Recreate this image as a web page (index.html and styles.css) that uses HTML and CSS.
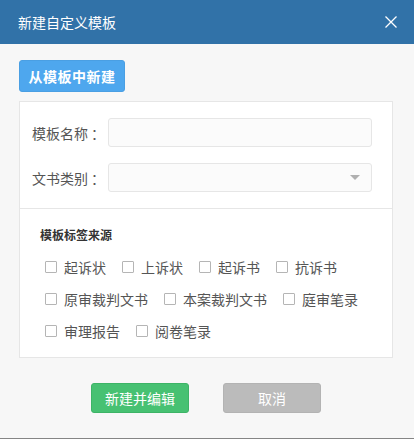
FILE: index.html
```html
<!DOCTYPE html>
<html lang="zh-CN">
<head>
<meta charset="utf-8">
<link rel="stylesheet" href="styles.css">
</head>
<body>
<div class="dialog">
  <div class="header">
    <span class="title">新建自定义模板</span>
    <svg class="close" width="12" height="12" viewBox="0 0 12 12"><path d="M0.5 0.5 L11.5 11.5 M11.5 0.5 L0.5 11.5" stroke="#fff" stroke-width="1.3" fill="none"/></svg>
  </div>
  <div class="content">
    <div class="top-row"><button class="btn-blue">从模板中新建</button></div>
    <div class="panel">
      <div class="form">
        <div class="field"><label class="lbl">模板名称<span class="colon">：</span></label><div class="input"></div></div>
        <div class="field"><label class="lbl">文书类别<span class="colon">：</span></label><div class="input select"><span class="caret"></span></div></div>
      </div>
      <div class="tags">
        <div class="tags-title">模板标签来源</div>
        <div class="row">
          <span class="cb"><i class="box"></i>起诉状</span>
          <span class="cb"><i class="box"></i>上诉状</span>
          <span class="cb"><i class="box"></i>起诉书</span>
          <span class="cb"><i class="box"></i>抗诉书</span>
        </div>
        <div class="row">
          <span class="cb"><i class="box"></i>原审裁判文书</span>
          <span class="cb"><i class="box"></i>本案裁判文书</span>
          <span class="cb"><i class="box"></i>庭审笔录</span>
        </div>
        <div class="row">
          <span class="cb"><i class="box"></i>审理报告</span>
          <span class="cb"><i class="box"></i>阅卷笔录</span>
        </div>
      </div>
    </div>
    <div class="footer">
      <button class="btn btn-green">新建并编辑</button>
      <button class="btn btn-grey">取消</button>
    </div>
  </div>
</div>
</body>
</html>
```
FILE: styles.css
```css
html, body {
  margin: 0;
  padding: 0;
}
body {
  width: 414px;
  height: 439px;
  overflow: hidden;
  font-family: "Noto Sans CJK SC", "Noto Sans", sans-serif;
  background: #f7f7f7;
}
.dialog {
  height: 438px;
  border-bottom: 1px solid #858585;
  background: #f7f7f7;
}
.header {
  height: 44px;
  background: #3172a8;
  display: flex;
  align-items: center;
  justify-content: space-between;
  padding: 0 17px 0 18px;
}
.title {
  color: #fff;
  font-size: 14px;
  line-height: 20px;
}
.close {
  display: block;
}
.content {
  padding: 16px 21px 0 19px;
}
.top-row {
  display: flex;
}
.btn-blue {
  height: 32px;
  width: 106px;
  padding: 0;
  border: 1px solid #4a9fe3;
  border-radius: 3px;
  background: #4ea7ee;
  color: #fff;
  font-family: inherit;
  font-size: 14px;
  font-weight: bold;
  letter-spacing: 0.5px;
}
.panel {
  margin-top: 9px;
  background: #fff;
  border: 1px solid #e6e6e6;
}
.form {
  padding: 16px 20px 16px 12px;
  display: flex;
  flex-direction: column;
  gap: 16px;
  border-bottom: 1px solid #e6e6e6;
}
.field {
  display: flex;
  align-items: center;
}
.lbl {
  width: 76px;
  font-size: 14px;
  color: #555;
  line-height: 20px;
}
.colon {
  margin-left: 3px;
}
.input {
  flex: 1;
  height: 27px;
  border: 1px solid #e6e6e6;
  border-radius: 3px;
  background: #fbfbfb;
  display: flex;
  align-items: center;
  justify-content: flex-end;
}
.caret {
  width: 0;
  height: 0;
  border-left: 5px solid transparent;
  border-right: 5px solid transparent;
  border-top: 5px solid #b0b0b0;
  margin-right: 11px;
}
.tags {
  padding: 16px 20px 10px 20px;
}
.tags-title {
  font-size: 12px;
  font-weight: bold;
  color: #333;
  line-height: 20px;
  margin-bottom: 6px;
}
.row {
  height: 32px;
  display: flex;
  align-items: center;
  gap: 16px;
  padding-left: 5px;
}
.cb {
  display: flex;
  align-items: center;
  gap: 7px;
  font-size: 14px;
  color: #555;
  line-height: 20px;
}
.box {
  display: block;
  width: 10px;
  height: 10px;
  border: 1px solid #b5b5b5;
  background: #fff;
  border-radius: 1px;
}
.footer {
  margin-top: 25px;
  display: flex;
  justify-content: center;
  gap: 34px;
}
.btn {
  width: 98px;
  height: 30px;
  padding: 0;
  border-radius: 3px;
  color: #fff;
  font-family: inherit;
  font-size: 14px;
}
.btn-green {
  background: #47c172;
  border: 1px solid #3db466;
}
.btn-grey {
  background: #bbbbbb;
  border: 1px solid #b3b3b3;
}
```
